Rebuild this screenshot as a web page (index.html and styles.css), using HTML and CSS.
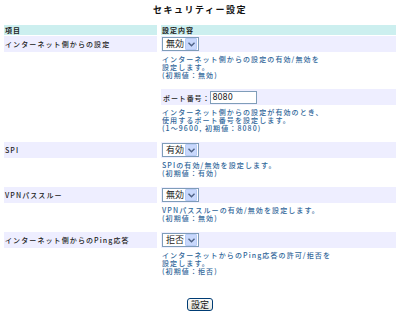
FILE: index.html
```html
<!DOCTYPE html>
<html lang="ja">
<head>
    <meta charset="UTF-8">
    <title>セキュリティー設定</title>
    <link rel="stylesheet" href="styles.css">
</head>
<body>
    <h1 class="page-title">セキュリティー設定</h1>

    <form class="settings-form">
        <table class="settings">
            <tr>
                <th class="col-name">項目</th>
                <th>設定内容</th>
            </tr>

            <!-- インターネット側からの設定 -->
            <tr class="item">
                <td class="label">インターネット側からの設定</td>
                <td><span class="select"><span class="value">無効</span><span class="arrow"><svg width="7" height="5" viewBox="0 0 7 5"><path d="M0.5 0.8 L3.5 3.8 L6.5 0.8" fill="none" stroke="#4d6185" stroke-width="1.4"/></svg></span></span></td>
            </tr>
            <tr>
                <td></td>
                <td class="desc">インターネット側からの設定の有効/無効を<br>設定します。<br>(初期値：無効)</td>
            </tr>
            <tr>
                <td></td>
                <td class="item-cell"><span class="sub-label">ポート番号：</span><span class="text-input">8080</span></td>
            </tr>
            <tr>
                <td></td>
                <td class="desc">インターネット側からの設定が有効のとき、<br>使用するポート番号を設定します。<br>(1～9600, 初期値：8080)</td>
            </tr>

            <!-- SPI -->
            <tr class="item">
                <td class="label">SPI</td>
                <td><span class="select"><span class="value">有効</span><span class="arrow"><svg width="7" height="5" viewBox="0 0 7 5"><path d="M0.5 0.8 L3.5 3.8 L6.5 0.8" fill="none" stroke="#4d6185" stroke-width="1.4"/></svg></span></span></td>
            </tr>
            <tr>
                <td></td>
                <td class="desc">SPIの有効/無効を設定します。<br>(初期値：有効)</td>
            </tr>

            <!-- VPNパススルー -->
            <tr class="item">
                <td class="label">VPNパススルー</td>
                <td><span class="select"><span class="value">無効</span><span class="arrow"><svg width="7" height="5" viewBox="0 0 7 5"><path d="M0.5 0.8 L3.5 3.8 L6.5 0.8" fill="none" stroke="#4d6185" stroke-width="1.4"/></svg></span></span></td>
            </tr>
            <tr>
                <td></td>
                <td class="desc">VPNパススルーの有効/無効を設定します。<br>(初期値：無効)</td>
            </tr>

            <!-- Ping応答 -->
            <tr class="item">
                <td class="label">インターネット側からのPing応答</td>
                <td><span class="select"><span class="value">拒否</span><span class="arrow"><svg width="7" height="5" viewBox="0 0 7 5"><path d="M0.5 0.8 L3.5 3.8 L6.5 0.8" fill="none" stroke="#4d6185" stroke-width="1.4"/></svg></span></span></td>
            </tr>
            <tr>
                <td></td>
                <td class="desc">インターネットからのPing応答の許可/拒否を<br>設定します。<br>(初期値：拒否)</td>
            </tr>
        </table>

        <div class="actions">
            <button type="button" class="submit-button">設定</button>
        </div>
    </form>
</body>
</html>
```

FILE: styles.css
```css
body {
    margin: 0;
    padding: 0;
    background-color: #fff;
    color: #222;
    font-family: "Noto Sans CJK JP", "DejaVu Sans", sans-serif;
}

.page-title {
    margin: 0 0 9px;
    padding-top: 4px;
    height: 12px;
    line-height: 12px;
    font-size: 9px;
    font-weight: bold;
    letter-spacing: 1.5px;
    text-align: center;
    color: #111;
}

.settings {
    width: 400px;
    border-collapse: separate;
    border-spacing: 4px 1px;
    margin-top: -1px;
}

.settings th {
    height: 10px;
    padding: 0 0 0 1px;
    line-height: 10px;
    font-size: 7px;
    font-weight: bold;
    letter-spacing: 1px;
    text-align: left;
    background-color: #ccefef;
}

.settings .col-name {
    width: 152px;
}

.settings td {
    padding: 0;
    line-height: 10px;
    vertical-align: middle;
}

.item td,
.item-cell {
    height: 16px;
    background-color: #eeeeff;
}

.label {
    padding-left: 1px !important;
    font-size: 7px;
    font-weight: 500;
    letter-spacing: 1.1px;
    color: #222;
}

.desc {
    padding: 2px 0 9px 1px !important;
    vertical-align: top !important;
    font-size: 7px;
    font-weight: 500;
    line-height: 8px !important;
    letter-spacing: 1.1px;
    color: #2f6699;
}

.select {
    display: inline-flex;
    align-items: center;
    justify-content: space-between;
    box-sizing: border-box;
    width: 37px;
    height: 14px;
    margin-left: 1px;
    padding: 0 1px 0 3px;
    border: 1px solid #7f9db9;
    background-color: #fff;
    font-size: 9px;
    line-height: 12px;
    color: #222;
    vertical-align: middle;
    white-space: nowrap;
}

.select .value {
    flex-shrink: 0;
}

.arrow {
    display: flex;
    flex-shrink: 0;
    align-items: center;
    justify-content: center;
    width: 10px;
    height: 10px;
    border: 1px solid #b8cbf6;
    border-radius: 1px;
    background-color: #c8d8fc;
}

.sub-label {
    margin-left: 2px;
    font-size: 7px;
    font-weight: 500;
    letter-spacing: 0.9px;
    color: #222;
    vertical-align: middle;
}

.text-input {
    display: inline-block;
    box-sizing: border-box;
    width: 47px;
    height: 13px;
    padding: 0 1px;
    border: 1px solid #7f9db9;
    background-color: #fff;
    font-family: "DejaVu Sans", sans-serif;
    font-size: 8px;
    line-height: 11px;
    color: #222;
    vertical-align: middle;
}

.actions {
    display: flex;
    justify-content: center;
    margin-top: 13px;
}

.submit-button {
    box-sizing: border-box;
    height: 13px;
    padding: 0 3px;
    border: 1px solid #003c74;
    border-radius: 3px;
    background: linear-gradient(#fcfcfb, #e6e6df);
    font-family: "Noto Sans CJK JP", sans-serif;
    font-size: 9px;
    line-height: 11px;
    color: #111;
    cursor: pointer;
}
```
